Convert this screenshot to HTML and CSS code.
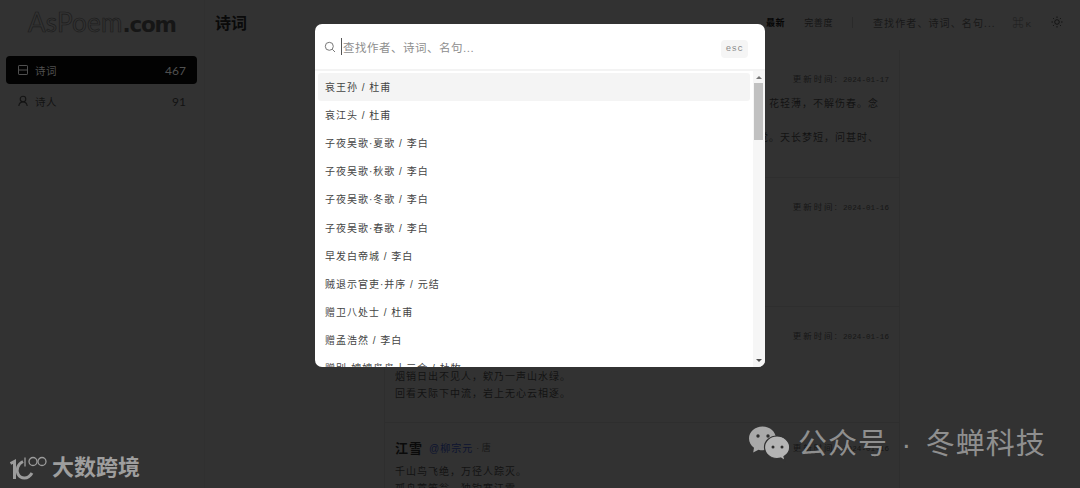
FILE: index.html
```html
<!DOCTYPE html>
<html lang="zh-CN">
<head>
<meta charset="utf-8">
<title>AsPoem</title>
<link rel="stylesheet" href="styles.css">
</head>
<body>
<div class="app">
  <aside class="sidebar">
    <div class="logo"><span class="logo-outline">AsPoem</span><span class="logo-bold">.com</span></div>
    <nav class="nav">
      <a class="nav-item active">
        <svg class="nav-icon" viewBox="0 0 12 12" fill="none" stroke="currentColor" stroke-width="1"><rect x="1.5" y="1.5" width="9" height="9" rx=".6"/><path d="M1.5 6h9"/></svg>
        <span class="nav-label">诗词</span><span class="nav-count">467</span>
      </a>
      <a class="nav-item">
        <svg class="nav-icon" viewBox="0 0 12 12" fill="none" stroke="currentColor" stroke-width="1.1"><circle cx="6" cy="4" r="2.8"/><path d="M1.8 11c.3-2.6 1.8-4 4.2-4s3.900 1.400 4.200 4"/></svg>
        <span class="nav-label">诗人</span><span class="nav-count">91</span>
      </a>
    </nav>
  </aside>
  <div class="main">
    <header class="topbar">
      <h1 class="page-title">诗词</h1>
      <div class="tools">
        <span class="sort current">最新</span>
        <span class="sort">完善度</span>
        <span class="divider"></span>
        <span class="fake-search"><span>查找作者、诗词、名句...</span><kbd class="shortcut"><span class="cmd">⌘</span> K</kbd></span>
        <span class="theme-btn">
          <svg viewBox="0 0 12 12" fill="none" stroke="currentColor" stroke-width=".9"><circle cx="6" cy="6" r="2.300"/><path d="M6 .5v1.500M6 10v1.500M.5 6H2M10 6h1.500M2.100 2.100l1 1M8.900 8.900l1 1M2.100 9.900l1-1M8.900 3.100l1-1"/></svg>
        </span>
      </div>
    </header>
    <section class="feed">
      <article class="card card-a">
        <div class="card-head"><h2 class="poem-title">念奴娇</h2><time class="date">更新时间: <span class="num">2024-01-17</span></time></div>
        <p class="verse">萧条庭院，又斜风细雨，重门须闭。宠柳娇花寒食近，种种恼人天气，诗成，花轻薄，不解伤春。念</p>
        <p class="verse">&nbsp;</p>
        <p class="verse">征鸿过尽，万千心事难寄。楼上几日春寒，帘垂四面，玉阑干慵倚。香消梦觉。天长梦短，问甚时、</p>
      </article>
      <article class="card card-b">
        <div class="card-head"><h2 class="poem-title">春晓</h2><time class="date">更新时间: <span class="num">2024-01-16</span></time></div>
        <p class="verse">春眠不觉晓，处处闻啼鸟。</p>
        <p class="verse">夜来风雨声，花落知多少。</p>
      </article>
      <article class="card card-c">
        <div class="card-head"><h2 class="poem-title">渔翁</h2><time class="date">更新时间: <span class="num">2024-01-16</span></time></div>
        <p class="verse">渔翁夜傍西岩宿，晓汲清湘燃楚竹。</p>
        <p class="verse">烟销日出不见人，欸乃一声山水绿。</p>
        <p class="verse">回看天际下中流，岩上无心云相逐。</p>
      </article>
      <article class="card card-d">
        <div class="card-head"><h2 class="poem-title">江雪</h2><span class="author">@柳宗元</span><span class="dynasty">· 唐</span><time class="date">更新时间: <span class="num">2024-01-16</span></time></div>
        <p class="verse">千山鸟飞绝，万径人踪灭。</p>
        <p class="verse">孤舟蓑笠翁，独钓寒江雪。</p>
      </article>
    </section>
  </div>
</div>

<div class="modal">
  <div class="modal-search">
    <svg class="search-icon" viewBox="0 0 12 12" fill="none" stroke="currentColor" stroke-width="1"><circle cx="5.300" cy="5.300" r="4"/><path d="M8.300 8.300l2.700 2.700"/></svg>
    <span class="caret"></span>
    <span class="placeholder">查找作者、诗词、名句...</span>
    <kbd class="esc">esc</kbd>
  </div>
  <div class="modal-body">
    <ul class="results">
      <li class="result selected">哀王孙 / 杜甫</li>
      <li class="result">哀江头 / 杜甫</li>
      <li class="result">子夜吴歌·夏歌 / 李白</li>
      <li class="result">子夜吴歌·秋歌 / 李白</li>
      <li class="result">子夜吴歌·冬歌 / 李白</li>
      <li class="result">子夜吴歌·春歌 / 李白</li>
      <li class="result">早发白帝城 / 李白</li>
      <li class="result">贼退示官吏·并序 / 元结</li>
      <li class="result">赠卫八处士 / 杜甫</li>
      <li class="result">赠孟浩然 / 李白</li>
      <li class="result">赠别·娉娉袅袅十三余 / 杜牧</li>
    </ul>
    <div class="scrollbar">
      <span class="arrow up"></span>
      <span class="thumb"></span>
      <span class="spacer"></span>
      <span class="arrow down"></span>
    </div>
  </div>
</div>

<div class="wm wm-left">
  <svg class="wm-left-logo" viewBox="0 0 40 24" fill="none" stroke="currentColor">
    <path d="M1.500 7.500L5.500 5.500V23" stroke-width="3"/>
    <path d="M14 5.500C8.500 8 7 14 9 18C11.500 23 19 24 23 17" stroke-width="3"/>
    <path d="M16 1.500v9" stroke-width="1.300"/>
    <circle cx="24" cy="5.500" r="4" stroke-width="1.300"/>
    <circle cx="33" cy="5.500" r="4" stroke-width="1.300"/>
  </svg>
  <span class="wm-left-text">大数跨境</span>
</div>
<div class="wm wm-right">
  <svg class="wechat" viewBox="0 0 42 38">
    <path class="wc-back" d="M14.500 1.500C7 1.500 1 6.800 1 13.500c0 3.800 2 7 5 9.300L5.200 27.500l5.300-2.800c1.300.4 2.600.6 4 .6 7.500 0 13.500-5.300 13.500-11.800S22 1.500 14.500 1.500z"/>
    <path class="wc-front" d="M29 11c-6.900 0-12.500 5-12.500 11.200S22.100 33.500 29 33.500c1.300 0 2.500-.2 3.700-.5l4.300 2.700-1-4.200c3.500-2.100 5.700-5.500 5.700-9.300C41.700 16 35.900 11 29 11z"/>
    <circle class="wc-eye" cx="10" cy="11" r="1.700"/><circle class="wc-eye" cx="20" cy="11" r="1.700"/>
    <circle class="wc-eye" cx="25" cy="22" r="1.500"/><circle class="wc-eye" cx="34" cy="22" r="1.500"/>
  </svg>
  <span class="wm-right-text">公众号 · 冬蝉科技</span>
</div>
</body>
</html>
```
FILE: styles.css
```css
* { box-sizing: border-box; }
html, body { margin: 0; height: 488px; overflow: hidden; }
body {
  position: relative;
  background: #323232;
  color: #1b1b1b;
  font-family: "Liberation Sans", "Noto Sans CJK SC", sans-serif;
}
h1, h2, p, ul { margin: 0; padding: 0; }
ul { list-style: none; }

.app { display: flex; height: 488px; }

/* sidebar */
.sidebar { width: 205px; flex: none; padding: 0 7px 0 6px; border-right: 1px solid #303030; }
.logo { height: 56px; padding: 4px 0 0 22px; line-height: 36px; white-space: nowrap; }
.logo-outline { color: transparent; -webkit-text-stroke: .7px #1c1c1c; font-family: "Lato", sans-serif; font-size: 26px; letter-spacing: .2px; }
.logo-bold { color: #161616; font-family: "DejaVu Sans", sans-serif; font-weight: 700; font-size: 21.500px; letter-spacing: -1.200px; }
.nav { display: flex; flex-direction: column; gap: 3px; }
.nav-item { display: flex; align-items: center; height: 28px; padding: 0 11px; border-radius: 4px; color: #131313; font-size: 10.500px; }
.nav-item.active { background: #020202; color: #505050; }
.nav-icon { width: 12px; height: 12px; margin-right: 6px; }
.nav-label { flex: 1; letter-spacing: .5px; }
.nav-count { font-family: "Lato", sans-serif; font-size: 12px; }

/* main */
.main { flex: 1; min-width: 0; display: flex; flex-direction: column; }
.topbar { height: 50px; flex: none; display: flex; align-items: flex-start; justify-content: space-between; padding: 13px 12px 0 10px; }
.page-title { margin-top: 2px; font-size: 16px; line-height: 18px; font-weight: 700; color: #0a0a0a; }
.tools { display: flex; align-items: center; height: 18px; font-size: 9px; }
.sort { color: #141414; letter-spacing: .6px; margin-right: 19px; }
.sort.current { color: #050505; font-weight: 700; }
.divider { width: 1px; height: 11px; background: #2a2a2a; margin-right: 20px; }
.fake-search { display: flex; align-items: center; width: 158px; font-size: 10px; letter-spacing: 1.100px; color: #181818; margin-right: 20px; white-space: nowrap; }
.fake-search > span { flex: 1; }
.shortcut { font: inherit; font-size: 8px; letter-spacing: 0; color: #1c1c1c; }
.cmd { font-size: 11px; }
.theme-btn { width: 12px; height: 12px; color: #101010; margin-right: 5px; }
.theme-btn svg { display: block; width: 12px; height: 12px; }

.feed { width: 516px; margin-left: 179px; flex: none; border-left: 1px solid #2e2e2e; border-right: 1px solid #2e2e2e; }
.card { padding: 0 10px; border-bottom: 1px solid #2e2e2e; }
.card-a { height: 128px; padding-top: 20px; }
.card-b { height: 129px; padding-top: 20px; }
.card-c { height: 116px; padding-top: 20px; }
.card-d { padding-top: 16px; }
.card-head { display: flex; align-items: center; height: 16px; margin-bottom: 9px; }
.card-c .card-head, .card-d .card-head { margin-bottom: 8px; }
.poem-title { font-size: 13px; font-weight: 700; color: #0a0a0a; letter-spacing: 1px; }
.author { margin-left: 6px; font-size: 10px; color: #0e1430; letter-spacing: 1px; }
.dynasty { margin-left: 3px; font-size: 9px; color: #181818; }
.date { margin-left: auto; font-size: 8.500px; letter-spacing: 1.900px; color: #161616; white-space: nowrap; }
.num { font-family: "Liberation Mono", monospace; font-size: 7.500px; letter-spacing: .100px; }
.verse { font-size: 10px; line-height: 17px; letter-spacing: 1px; color: #121212; white-space: nowrap; overflow: hidden; }

/* modal */
.modal {
  position: absolute; left: 315px; top: 24px; width: 450px; height: 343px;
  background: #fff; border-radius: 7px; overflow: hidden;
  display: flex; flex-direction: column; color: #444;
}
.modal-search { height: 47px; flex: none; display: flex; align-items: center; padding: 0 17px 0 9px; border-bottom: 2px solid #f3f3f3; }
.search-icon { width: 12px; height: 12px; color: #777; margin-right: 5px; flex: none; }
.caret { width: 1px; height: 17px; background: #555; margin-right: 1px; flex: none; }
.placeholder { flex: 1; font-size: 11.500px; letter-spacing: .500px; color: #8e8e8e; }
.esc { margin-top: 5px; width: 27px; height: 18px; border-radius: 4px; background: #f5f5f5; color: #888; font: 9px/18px "Liberation Mono", monospace; letter-spacing: .500px; text-align: center; }
.modal-body { flex: 1; min-height: 0; display: flex; }
.results { flex: 1; min-width: 0; overflow: hidden; padding: 2px 3px; }
.result { height: 28.120px; padding-left: 7px; border-radius: 3px; font-size: 10px; line-height: 30px; letter-spacing: 1px; color: #444; white-space: nowrap; }
.result.selected { background: #f4f4f4; }
.scrollbar { width: 12px; flex: none; display: flex; flex-direction: column; background: #f6f6f6; }
.arrow { height: 12px; width: 100%; flex: none; position: relative; }
.arrow::after { content: ""; position: absolute; left: 3px; border-left: 3px solid transparent; border-right: 3px solid transparent; }
.arrow.up::after { top: 5px; border-bottom: 3px solid #777; }
.arrow.down::after { top: 4px; border-top: 3px solid #505050; }
.thumb { width: 9px; margin-left: 1px; height: 57px; background: #c1c1c1; flex: none; }
.spacer { flex: 1; }

/* watermarks */
.wm { position: absolute; display: flex; align-items: center; }
.wm-left { left: 9px; top: 455px; color: #9c9c9c; }
.wm-left-logo { width: 40px; height: 24px; margin-right: 3px; }
.wm-left-text { font-size: 22px; line-height: 26px; font-weight: 700; color: #9e9e9e; }
.wm-right { left: 748px; top: 424px; }
.wechat { width: 42px; height: 38px; margin-right: 8px; }
.wc-back { fill: #a9a9a9; }
.wc-front { fill: #b4b4b4; stroke: #323232; stroke-width: 1.200px; }
.wc-eye { fill: #2e2e2e; }
.wm-right-text { font-size: 29px; line-height: 40px; color: #8f8f8f; letter-spacing: 1px; word-spacing: 4.500px; white-space: nowrap; }
```
